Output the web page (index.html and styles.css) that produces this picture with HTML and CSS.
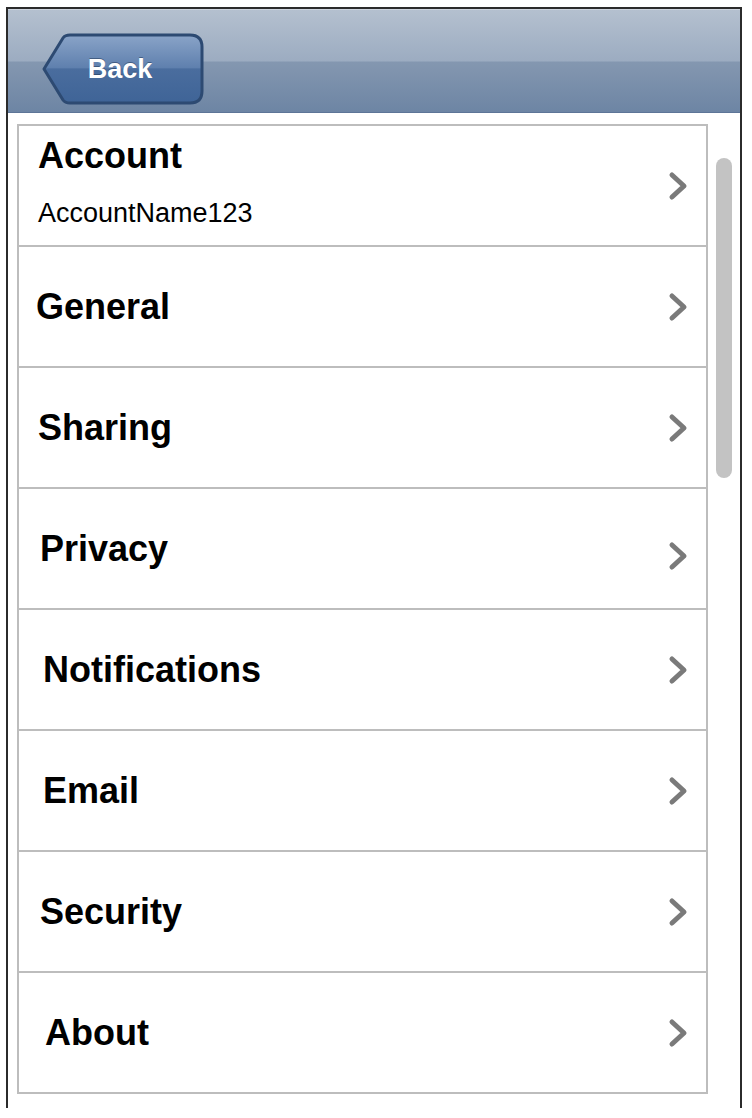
FILE: index.html
```html
<!DOCTYPE html>
<html>
<head>
<meta charset="utf-8">
<link rel="stylesheet" href="styles.css">
</head>
<body>
<div class="frame">
  <header class="navbar">
    <button class="back">
      <svg class="back-shape" width="164" height="72" viewBox="0 0 164 72">
        <defs>
          <linearGradient id="bg" x1="0" y1="0" x2="0" y2="1">
            <stop offset="0" stop-color="#8aa4c8"/>
            <stop offset="0.48" stop-color="#5f80ae"/>
            <stop offset="0.5" stop-color="#4a6d9e"/>
            <stop offset="1" stop-color="#3f6497"/>
          </linearGradient>
        </defs>
        <path d="M3 36 L22 5 Q24 2 29 2 H149 Q161 2 161 14 V58 Q161 70 149 70 H29 Q24 70 22 67 Z" fill="url(#bg)" stroke="#2d4a72" stroke-width="3" stroke-linejoin="round"/>
      </svg>
      <span class="back-label">Back</span>
    </button>
  </header>
  <div class="content">
    <ul class="list">
      <li class="row row-account">
        <div class="labels in-38">
          <span class="title">Account</span>
          <span class="subtitle">AccountName123</span>
        </div>
        <svg class="chev" width="22" height="30" viewBox="0 0 22 30"><polyline points="4,4 16,15 4,26" fill="none" stroke="#7a7a7a" stroke-width="5" stroke-linecap="round" stroke-linejoin="round"/></svg>
      </li>
      <li class="row">
        <span class="title in-36">General</span>
        <svg class="chev" width="22" height="30" viewBox="0 0 22 30"><polyline points="4,4 16,15 4,26" fill="none" stroke="#7a7a7a" stroke-width="5" stroke-linecap="round" stroke-linejoin="round"/></svg>
      </li>
      <li class="row">
        <span class="title in-38">Sharing</span>
        <svg class="chev" width="22" height="30" viewBox="0 0 22 30"><polyline points="4,4 16,15 4,26" fill="none" stroke="#7a7a7a" stroke-width="5" stroke-linecap="round" stroke-linejoin="round"/></svg>
      </li>
      <li class="row">
        <span class="title in-40">Privacy</span>
        <svg class="chev low" width="22" height="30" viewBox="0 0 22 30"><polyline points="4,4 16,15 4,26" fill="none" stroke="#7a7a7a" stroke-width="5" stroke-linecap="round" stroke-linejoin="round"/></svg>
      </li>
      <li class="row">
        <span class="title in-43">Notifications</span>
        <svg class="chev" width="22" height="30" viewBox="0 0 22 30"><polyline points="4,4 16,15 4,26" fill="none" stroke="#7a7a7a" stroke-width="5" stroke-linecap="round" stroke-linejoin="round"/></svg>
      </li>
      <li class="row">
        <span class="title in-43">Email</span>
        <svg class="chev" width="22" height="30" viewBox="0 0 22 30"><polyline points="4,4 16,15 4,26" fill="none" stroke="#7a7a7a" stroke-width="5" stroke-linecap="round" stroke-linejoin="round"/></svg>
      </li>
      <li class="row">
        <span class="title in-40">Security</span>
        <svg class="chev" width="22" height="30" viewBox="0 0 22 30"><polyline points="4,4 16,15 4,26" fill="none" stroke="#7a7a7a" stroke-width="5" stroke-linecap="round" stroke-linejoin="round"/></svg>
      </li>
      <li class="row">
        <span class="title in-45">About</span>
        <svg class="chev" width="22" height="30" viewBox="0 0 22 30"><polyline points="4,4 16,15 4,26" fill="none" stroke="#7a7a7a" stroke-width="5" stroke-linecap="round" stroke-linejoin="round"/></svg>
      </li>
    </ul>
    <div class="scrollbar"></div>
  </div>
</div>
</body>
</html>
```
FILE: styles.css
```css
html, body {
  margin: 0;
  padding: 0;
  background: #ffffff;
}
body {
  font-family: "Liberation Sans", Arial, Helvetica, sans-serif;
  color: #000;
}
.frame {
  margin: 7px 0 0 6px;
  width: 732px;
  height: 1099px;
  border: 2px solid #2b2b2b;
  border-bottom: none;
  background: #fff;
}
.navbar {
  box-sizing: border-box;
  height: 104px;
  border-top: 1px solid #cdd4de;
  border-bottom: 1px solid #5d7597;
  background: linear-gradient(to bottom, #b4c0cf 0%, #9cacc1 50%, #8497b0 51%, #6d85a4 100%);
  display: flex;
  align-items: flex-start;
  padding: 23px 0 0 33px;
}
.back {
  position: relative;
  width: 164px;
  height: 72px;
  padding: 0;
  border: none;
  background: none;
  display: flex;
  align-items: center;
  justify-content: center;
  cursor: pointer;
}
.back-shape {
  position: absolute;
  left: 0;
  top: 0;
}
.back-label {
  position: relative;
  font-family: "Liberation Sans", Arial, sans-serif;
  font-weight: bold;
  font-size: 27px;
  color: #ffffff;
  padding-right: 6px;
  text-shadow: 0 -1px 0 rgba(30, 50, 80, 0.5);
}
.content {
  display: flex;
  align-items: flex-start;
  padding: 11px 0 0 9px;
  gap: 8px;
}
.list {
  list-style: none;
  margin: 0;
  padding: 0;
  width: 691px;
  border: 2px solid #bdbdbd;
  box-sizing: border-box;
}
.row {
  height: 119px;
  border-bottom: 2px solid #bdbdbd;
  display: flex;
  align-items: center;
  justify-content: space-between;
  padding-right: 16px;
}
.row:last-child {
  border-bottom: none;
}
.labels {
  display: flex;
  flex-direction: column;
  align-self: flex-start;
  padding-top: 10px;
}
.title {
  font-weight: bold;
  font-size: 36px;
  line-height: 40px;
}
.subtitle {
  font-size: 27px;
  line-height: 32px;
  margin-top: 21px;
}
.in-36 { padding-left: 17px; }
.in-38 { padding-left: 19px; }
.in-40 { padding-left: 21px; }
.in-43 { padding-left: 24px; }
.in-45 { padding-left: 26px; }
.chev {
  flex: none;
}
.chev.low {
  margin-top: 14px;
}
.scrollbar {
  width: 16px;
  height: 320px;
  margin-top: 34px;
  border-radius: 8px;
  background: #c3c3c3;
}
```
